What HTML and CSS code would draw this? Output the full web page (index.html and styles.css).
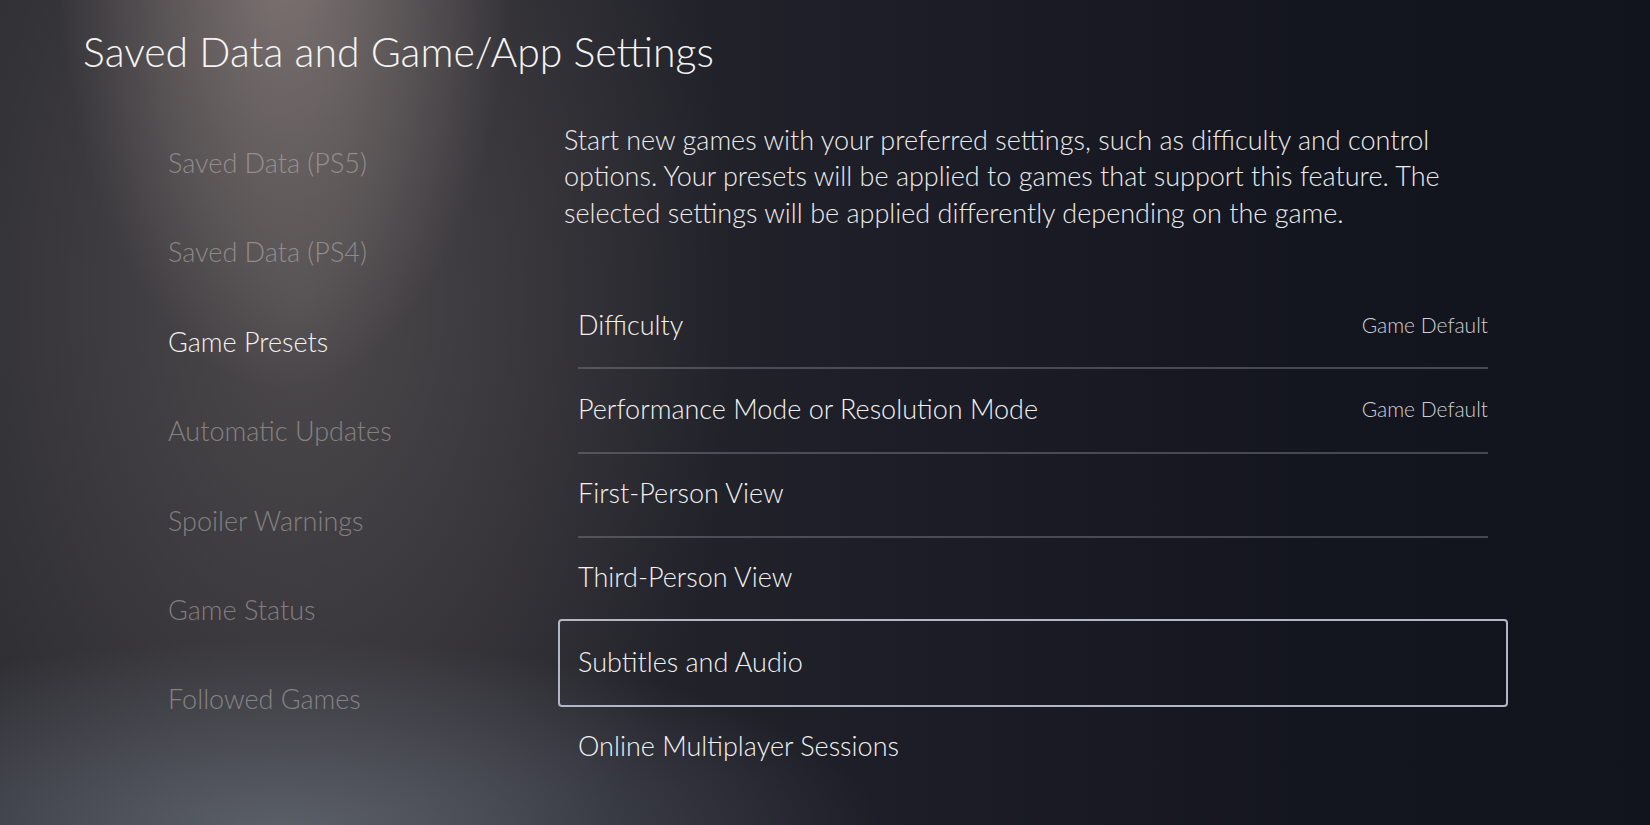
FILE: index.html
```html
<!DOCTYPE html>
<html lang="en">
<head>
  <meta charset="UTF-8" />
  <meta name="viewport" content="width=device-width, initial-scale=1.0" />
  <title>Saved Data and Game/App Settings</title>
  <link rel="stylesheet" href="styles.css">
</head>
<body>
  <div class="screen">
    <h1 class="page-title">Saved Data and Game/App Settings</h1>

    <div class="layout">
      <ul class="side-menu">
        <li>Saved Data (PS5)</li>
        <li>Saved Data (PS4)</li>
        <li class="active">Game Presets</li>
        <li>Automatic Updates</li>
        <li>Spoiler Warnings</li>
        <li>Game Status</li>
        <li>Followed Games</li>
      </ul>

      <div class="panel">
        <p class="intro">Start new games with your preferred settings, such as difficulty and control options. Your presets will be applied to games that support this feature. The selected settings will be applied differently depending on the game.</p>

        <ul class="settings">
          <li class="setting"><span class="label">Difficulty</span><span class="value">Game Default</span></li>
          <li class="setting"><span class="label">Performance Mode or Resolution Mode</span><span class="value">Game Default</span></li>
          <li class="setting"><span class="label">First-Person View</span></li>
          <li class="setting"><span class="label">Third-Person View</span></li>
          <li class="setting focused"><span class="label">Subtitles and Audio</span></li>
          <li class="setting"><span class="label">Online Multiplayer Sessions</span></li>
        </ul>
      </div>
    </div>
  </div>
</body>
</html>
```

FILE: styles.css
```css
* {
  box-sizing: border-box;
}
html, body {
  height: 100%;
}
body {
  margin: 0;
  overflow: hidden;
  font-family: Lato, 'Open Sans', sans-serif;
  font-weight: 300;
  color: #f2f2f2;
  background:
    radial-gradient(ellipse 230px 460px at 285px -70px, rgba(196, 178, 170, 0.5), rgba(196, 178, 170, 0) 100%),
    radial-gradient(ellipse 600px 190px at 280px 830px, rgba(118, 126, 138, 0.6), rgba(118, 126, 138, 0) 100%),
    radial-gradient(ellipse 440px 720px at 300px 300px, rgba(90, 85, 86, 0.75), rgba(90, 85, 86, 0) 100%),
    linear-gradient(90deg, #2a2a30 0%, #26262d 30%, #1c1d26 55%, #14161f 80%, #12141d 100%);
}
.screen {
  height: 100%;
  padding: 26px 0 0 83px;
}
.page-title {
  margin: 0;
  font-size: 41px;
  font-weight: 300;
  line-height: 52px;
  color: #f4f4f4;
}
.layout {
  display: flex;
  margin-top: 38px;
}
.side-menu {
  list-style: none;
  margin: 0;
  padding: 2px 0 0 85px;
  width: 475px;
}
.side-menu li {
  font-size: 27px;
  line-height: 89.4px;
  color: rgba(200, 195, 195, 0.5);
}
.side-menu li.active {
  color: #f2f2f2;
}
.panel {
  width: 950px;
}
.intro {
  margin: 6px 0 0 6px;
  font-size: 27px;
  line-height: 36.4px;
  color: #ececec;
  width: 900px;
}
.settings {
  list-style: none;
  margin: 55px 0 0;
  padding: 0;
}
.setting {
  position: relative;
  display: flex;
  justify-content: space-between;
  align-items: center;
  height: 84.2px;
  padding: 0 18px 8px;
  border: 2px solid transparent;
  border-radius: 4px;
}
/* thin divider between rows, inset like the labels */
.setting::after {
  content: '';
  position: absolute;
  left: 18px;
  right: 18px;
  bottom: -1px;
  height: 2px;
  background: rgba(120, 122, 132, 0.5);
}
.setting:nth-child(n+4)::after {
  display: none;
}
/* focus frame sits a little taller than a normal row */
.setting.focused {
  margin-top: -4px;
  height: 88.2px;
  padding-top: 4px;
  border-color: #b3b6c6;
}
.label {
  font-size: 27px;
  color: #f2f2f2;
}
.value {
  font-size: 21px;
  color: #cfd0d6;
}
```
